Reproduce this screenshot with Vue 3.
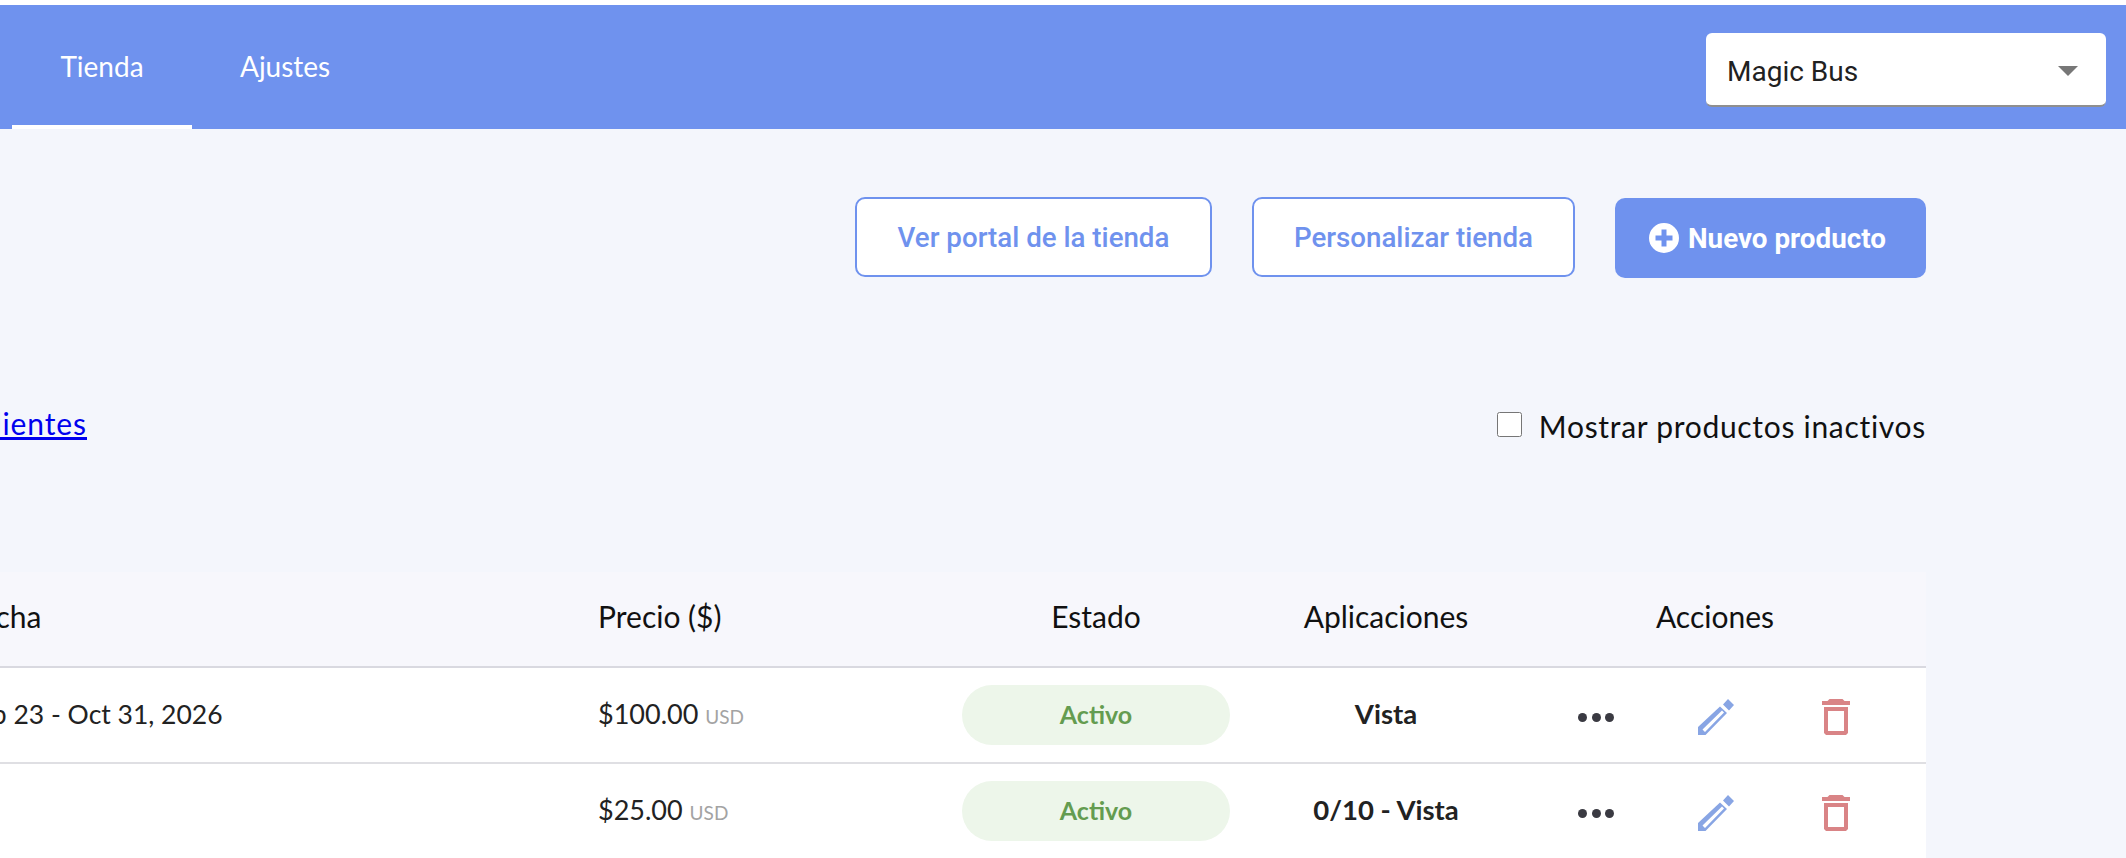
<template>
  <div class="page">
    <header class="topbar">
      <nav class="tabs">
        <a class="tab active">Tienda</a>
        <a class="tab">Ajustes</a>
      </nav>
      <div class="select">
        <span>Magic Bus</span>
        <i class="caret"></i>
      </div>
    </header>

    <main class="content">
      <div class="toolbar">
        <button class="btn outline btn-portal">Ver portal de la tienda</button>
        <button class="btn outline btn-custom">Personalizar tienda</button>
        <button class="btn solid">
          <svg class="plus" viewBox="0 0 30 30">
            <path fill-rule="evenodd" d="M15 0a15 15 0 1 0 0 30a15 15 0 0 0 0-30zM12.500 6.500h5v6h6v5h-6v6h-5v-6h-6v-5h6z" />
          </svg>
          Nuevo producto
        </button>
      </div>

      <div class="filters">
        <div class="link-box"><a class="link">Ver clientes</a></div>
        <label class="inactive">
          <input type="checkbox" />
          <span>Mostrar productos inactivos</span>
        </label>
      </div>

      <section class="table">
        <div class="row head">
          <div>Fecha</div>
          <div>Precio ($)</div>
          <div class="center">Estado</div>
          <div class="center">Aplicaciones</div>
          <div class="center th-actions">Acciones</div>
        </div>
        <div v-for="p in products" :key="p.price" class="row">
          <div class="cell date">{{ p.date }}</div>
          <div class="cell">{{ p.price }} <small>USD</small></div>
          <div><span class="pill">Activo</span></div>
          <div class="cell center apps">{{ p.apps }}</div>
          <div class="actions">
            <span class="dots"><i></i><i></i><i></i></span>
            <svg class="edit" viewBox="0 0 36 36">
              <path fill-rule="evenodd" d="M30 0l6 6-5 5.500-6-6zM0 28L22 7.500l7 6.500L7.500 36H0zM4.500 30.500L24 11.500l2 2L7 33z" />
            </svg>
            <svg class="trash" viewBox="0 0 28 36">
              <path fill-rule="evenodd" d="M7.500 0h13l2 2H28v4H0V2h5.500zM2 8h24v26l-2 2H4l-2-2zM6 12v20h16V12z" />
            </svg>
          </div>
        </div>
      </section>
    </main>
  </div>
</template>

<script setup>
const products = [
  { date: 'Feb 23 - Oct 31, 2026', price: '$100.00', apps: 'Vista' },
  { date: '', price: '$25.00', apps: '0/10 - Vista' },
]
</script>

<style>
html, body {
  margin: 0;
  overflow: hidden;
}
</style>

<style scoped>
.page {
  width: 2126px;
  height: 858px;
  overflow: hidden;
  padding-top: 5px;
  box-sizing: border-box;
  background: linear-gradient(#fff 5px, #f4f6fc 5px);
  font-family: Lato, "Open Sans", sans-serif;
  color: #222;
}

.topbar {
  height: 124px;
  background: #6f92ee;
  display: flex;
  justify-content: space-between;
  padding: 0 20px 0 12px;
}
.tabs {
  display: flex;
}
.tab {
  width: 180px;
  height: 120px;
  border-bottom: 4px solid transparent;
  color: #fff;
  font-size: 28px;
  line-height: 122px;
  text-align: center;
}
.tab + .tab {
  width: auto;
  margin-left: 48px;
}
.tab.active {
  border-bottom-color: #fff;
}

.select {
  margin-top: 28px;
  width: 400px;
  height: 74px;
  box-sizing: border-box;
  background: #fff;
  border-radius: 6px;
  border-bottom: 2px solid #8f8f8f;
  padding: 4px 28px 0 21px;
  display: flex;
  align-items: center;
  justify-content: space-between;
  font-family: Roboto, sans-serif;
  font-size: 28px;
  color: #212121;
}
.caret {
  width: 0;
  height: 0;
  border-left: 10px solid transparent;
  border-right: 10px solid transparent;
  border-top: 10px solid #777;
}

.content {
  margin-left: -36px;
  width: 1962px;
}
.toolbar {
  display: flex;
  justify-content: flex-end;
  align-items: flex-start;
  margin-top: 68px;
  height: 81px;
}
.btn {
  height: 80px;
  box-sizing: border-box;
  border-radius: 10px;
  font-family: Roboto, sans-serif;
  font-size: 27.700px;
  font-weight: 500;
  display: flex;
  align-items: center;
  justify-content: center;
  padding: 0;
}
.outline {
  background: #fff;
  border: 2px solid #6f92ee;
  color: #6f92ee;
}
.btn-portal {
  width: 357px;
  margin-right: 40px;
}
.btn-custom {
  width: 323px;
  margin-right: 40px;
}
.solid {
  width: 311px;
  border: 0;
  background: #6f92ee;
  color: #fff;
  margin-top: 1px;
  padding-right: 6px;
  gap: 9px;
  font-weight: 700;
  font-size: 27.800px;
}
.plus {
  width: 30px;
  height: 30px;
  fill: #fff;
}

.filters {
  display: flex;
  justify-content: space-between;
  align-items: center;
  margin-top: 117px;
  height: 58px;
}
.link-box {
  width: 123px;
  display: flex;
  justify-content: flex-end;
  white-space: nowrap;
  padding-bottom: 2px;
}
.link {
  color: #0000ee;
  text-decoration: underline;
  font-size: 30px;
  letter-spacing: 0.9px;
}
.inactive {
  display: flex;
  align-items: center;
  gap: 17px;
  font-size: 30px;
  letter-spacing: 0.7px;
  color: #111;
}
.inactive input {
  width: 25px;
  height: 25px;
  margin: 0;
}
.inactive span {
  padding-top: 3px;
}

.table {
  margin-top: 119px;
}
.row {
  display: grid;
  grid-template-columns: 634px 364px 268px 312px 384px;
  align-items: center;
  height: 94px;
  background: #fff;
  border-bottom: 2px solid #dfdfe3;
  font-size: 27px;
}
.row.head {
  background: #f7f7fc;
  border-bottom-color: #d9d9e0;
  color: #111;
  font-size: 30px;
  height: 87px;
  padding-bottom: 7px;
}
.cell {
  padding-bottom: 3px;
}
.center {
  text-align: center;
}
.th-actions {
  padding-right: 38px;
}
.date {
  font-size: 26.500px;
}
small {
  font-size: 19px;
  color: #a3a3a3;
}
.pill {
  display: block;
  height: 60px;
  line-height: 58px;
  border-radius: 30px;
  background: #edf6ea;
  color: #649c50;
  font-weight: 700;
  font-size: 25px;
  text-align: center;
}
.apps {
  font-weight: 700;
  font-size: 27.500px;
}
.actions {
  display: flex;
  align-items: center;
  padding: 4px 0 0 36px;
}
.dots {
  display: flex;
  width: 36px;
  justify-content: space-between;
}
.dots i {
  width: 9px;
  height: 9px;
  border-radius: 50%;
  background: #3a3a42;
}
.edit {
  width: 36px;
  height: 36px;
  margin: 0 88px 0 84px;
  fill: #88a5e4;
}
.trash {
  width: 28px;
  height: 36px;
  fill: #d98486;
}
</style>
